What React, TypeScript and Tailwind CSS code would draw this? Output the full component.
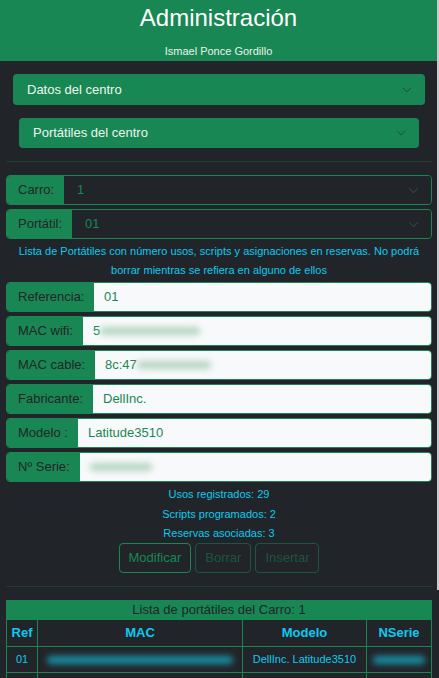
import React from 'react';

const font = { fontFamily: '"Liberation Sans", Arial, sans-serif' };

function Chevron({ className }: { className?: string }) {
  return (
    <svg viewBox="0 0 16 16" className={className} fill="none" stroke="currentColor" strokeWidth="1.6" strokeLinecap="round" strokeLinejoin="round">
      <path d="M2 5l6 6 6-6" />
    </svg>
  );
}

function Blur({ w, tone = 'green' }: { w: number; tone?: 'green' | 'cyan' }) {
  return (
    <span
      className={`inline-block h-[8px] rounded-full blur-[3px] align-middle ${tone === 'green' ? 'bg-[#b3d6c2]' : 'bg-[#1a8ea5]'}`}
      style={{ width: w }}
    />
  );
}

function SelectRow({ label, value, labelW }: { label: string; value: string; labelW: string }) {
  return (
    <div className="flex h-[30px] rounded border border-[#198754] overflow-hidden">
      <div className={`${labelW} shrink-0 bg-[#198754] text-[#212529] text-[13px] flex items-center pl-[11px]`}>{label}</div>
      <div className="flex-1 flex items-center justify-between pl-[13px] pr-[12px] bg-[#212529] text-[#198754] text-[13px]">
        <span>{value}</span>
        <Chevron className="w-[11px] h-[11px] text-[#3a3f45]" />
      </div>
    </div>
  );
}

function InputRow({ label, labelW, children }: { label: string; labelW: string; children?: React.ReactNode }) {
  return (
    <div className="flex h-[30px] rounded border border-[#198754] overflow-hidden">
      <div className={`${labelW} shrink-0 bg-[#198754] text-[#212529] text-[13px] flex items-center pl-[11px]`}>{label}</div>
      <div className="flex-1 flex items-center pl-[10px] bg-[#f8f9fa] text-[#198754] text-[13px]">{children}</div>
    </div>
  );
}

export default function App() {
  return (
    <div className="relative min-h-[678px] w-[439px] bg-[#212529] overflow-hidden" style={font}>
      {/* Header */}
      <div className="bg-[#198754] h-[61px] w-[437px] flex flex-col items-center text-white">
        <h1 className="text-[24px] leading-none mt-[6px]">Administración</h1>
        <p className="text-[11px] mt-[13px] text-[#e8f3ec]">Ismael Ponce Gordillo</p>
      </div>

      {/* Accordions */}
      <div className="px-[13px] pt-[13px] w-[438px]">
        <div className="h-[31px] rounded bg-[#198754] flex items-center justify-between pl-[14px] pr-[13px] text-[13px] text-[#eef6f1]">
          <span>Datos del centro</span>
          <Chevron className="w-[10px] h-[10px] text-[#2b4a38]" />
        </div>
        <div className="mx-[6px] mt-[13px] h-[30px] rounded bg-[#198754] flex items-center justify-between pl-[14px] pr-[13px] text-[13px] text-[#eef6f1]">
          <span>Portátiles del centro</span>
          <Chevron className="w-[10px] h-[10px] text-[#2b4a38]" />
        </div>
      </div>

      <div className="mx-[6px] mt-[13px] w-[426px] h-px bg-[#1f3d2c]" />

      {/* Form */}
      <div className="px-[6px] pt-[13px] w-[438px] flex flex-col gap-[4px]">
        <SelectRow label="Carro:" value="1" labelW="w-[57px]" />
        <SelectRow label="Portátil:" value="01" labelW="w-[65px]" />
        <p className="text-[#0dcaf0] text-[11px] leading-[19px] text-center px-[6px] mt-[-1px] mb-[-2px]">
          Lista de Portátiles con número usos, scripts y asignaciones en reservas. No podrá borrar mientras se refiera en alguno de ellos
        </p>
        <InputRow label="Referencia:" labelW="w-[87px]">01</InputRow>
        <InputRow label="MAC wifi:" labelW="w-[76px]">
          <span>5</span><Blur w={100} />
        </InputRow>
        <InputRow label="MAC cable:" labelW="w-[88px]">
          <span>8c:47</span><Blur w={74} />
        </InputRow>
        <InputRow label="Fabricante:" labelW="w-[86px]">DellInc.</InputRow>
        <InputRow label="Modelo :" labelW="w-[71px]">Latitude3510</InputRow>
        <InputRow label="Nº Serie:" labelW="w-[73px]">
          <Blur w={62} />
        </InputRow>
      </div>

      {/* Counts */}
      <div className="w-[438px] flex flex-col items-center text-[#0dcaf0] text-[11px] leading-[19.5px] mt-[3px]">
        <span>Usos registrados: 29</span>
        <span>Scripts programados: 2</span>
        <span>Reservas asociadas: 3</span>
      </div>

      {/* Buttons */}
      <div className="w-[438px] flex justify-center gap-[4px] mt-[-1px] text-[13px]">
        <button className="h-[30px] px-[9px] rounded border border-[#198754] text-[#198754]">Modificar</button>
        <button className="h-[30px] px-[9px] rounded border border-[#198754] text-[#198754] opacity-50">Borrar</button>
        <button className="h-[30px] px-[9px] rounded border border-[#198754] text-[#198754] opacity-50">Insertar</button>
      </div>

      <div className="mx-[6px] mt-[13px] w-[426px] h-px bg-[#1f3d2c]" />

      {/* Table */}
      <div className="px-[6px] pt-[13px] w-[438px]">
        <table className="w-[426px] border-collapse text-[#0dcaf0]">
          <caption className="caption-top bg-[#198754] text-[#212529] text-[13px] h-[19px] leading-[19px]">
            Lista de portátiles del Carro: 1
          </caption>
          <thead>
            <tr className="h-[27px] text-[13px] font-bold">
              <th className="border border-[#198754] w-[31px]">Ref</th>
              <th className="border border-[#198754] w-[205px]">MAC</th>
              <th className="border border-[#198754] w-[124px]">Modelo</th>
              <th className="border border-[#198754]">NSerie</th>
            </tr>
          </thead>
          <tbody>
            <tr className="h-[26px] text-[11px]">
              <td className="border border-[#198754] text-center">01</td>
              <td className="border border-[#198754] text-center"><Blur w={186} tone="cyan" /></td>
              <td className="border border-[#198754] text-center">DellInc. Latitude3510</td>
              <td className="border border-[#198754] text-center"><Blur w={52} tone="cyan" /></td>
            </tr>
            <tr className="h-[26px] text-[11px]">
              <td className="border border-[#198754]"></td>
              <td className="border border-[#198754]"></td>
              <td className="border border-[#198754]"></td>
              <td className="border border-[#198754]"></td>
            </tr>
          </tbody>
        </table>
      </div>

      {/* scrollbar thumb */}
      <div className="absolute right-0 top-0 w-[2px] h-[590px] bg-[#c9cbcd]" />
    </div>
  );
}
